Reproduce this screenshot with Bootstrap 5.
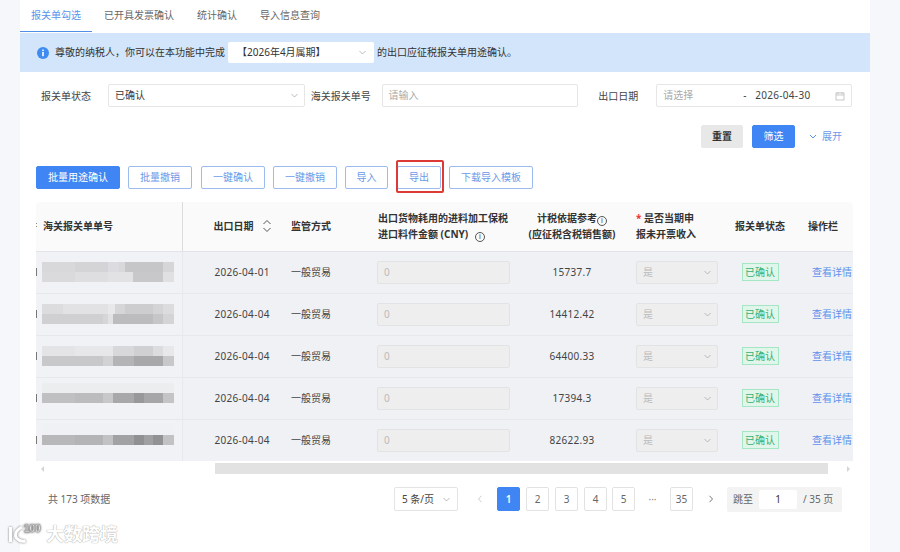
<!DOCTYPE html>
<html lang="zh"><head><meta charset="utf-8"><title>报关单勾选</title>
<link rel="stylesheet" href="https://cdn.jsdelivr.net/npm/bootstrap@5.3.0/dist/css/bootstrap.min.css">
<style>
html,body{height:552px;overflow:hidden}
body{background:#f5f7fa;font-family:"Noto Sans","Noto Sans CJK SC",sans-serif;font-size:10px;color:#3a3a3a}
.shell{width:850px;height:552px;margin-left:20px;background:#fff;position:relative;padding:0}
.tabbar{height:33px;gap:23px;padding-left:11px}
.tabbar a{display:block;line-height:30px;height:32px;color:#666;text-decoration:none;font-size:10px}
.tabbar a.on{color:#5b93ea;border-bottom:1px solid #4f8fe8;margin-left:-11px;padding:0 11px;margin-right:-11px}
.notice{height:39px;background:#d2e5fa;padding-left:17px;color:#333}
.notice svg.info{margin-right:6px}
.period{width:146px;height:21px;background:#fff;border-radius:2px;margin:0 3px 0 3px;padding:0 8px 0 9px;color:#333}
.filter{padding:12px 18px 0 21px;height:52px}
.lab{color:#444;line-height:24px}
.fld{height:23px;border:1px solid #e6e6e6;border-radius:2px;background:#fff;padding:0 6px}
.ph{color:#aaa}
.acts{height:23px;padding-right:28px;margin-top:1px;gap:9px}
.unfold{color:#6c9ae8;width:33px;white-space:nowrap;margin-left:5px}
.unfold svg{margin-right:5px}
.btnx{height:23px;font-size:10px;line-height:21px;padding:0;border-radius:2px;text-align:center;border:1px solid #9bbcec;background:#fff;color:#6c9ae8}
.btnx.solid{background:#3f86f4;border-color:#3f86f4;color:#fff}
.btnx.mute{background:#e8e8e8;border-color:#e8e8e8;color:#333;font-weight:600}
.tools{padding:18px 0 0 16px;height:54px}
.redbox{position:absolute;left:376px;top:160px;width:48px;height:33px;border:2px solid #dc3a35;border-radius:2px}
.gridwrap{margin-left:16px;width:817px;height:259px;overflow:hidden;position:relative;border-radius:4px 4px 0 0}
.datagrid{table-layout:fixed;width:817px;border-collapse:collapse;margin:0;font-size:10px}
.datagrid th{height:49px;background:#fafafa;font-weight:700;color:#333;border:0;border-bottom:1px solid #e2e4e8;padding:0;line-height:16px;vertical-align:middle}
.datagrid td{height:42px;background:#eff1f4;border:0;border-bottom:1px solid #e6e8eb;padding:0;vertical-align:middle;color:#444}
.datagrid .stick{background:#f1f2f5;border-right:1px solid #e8e9ec;position:relative}
.datagrid th.stick{background:#fafafa;border-right:1px solid #dcdcdc;padding-left:7px}
.tick{position:absolute;left:0;top:50%;width:1px;height:8px;margin-top:-4px;background:#777}
.dots{position:absolute;left:0;top:50%;width:1px;height:6px;margin-top:-3px;background:repeating-linear-gradient(180deg,#888 0 1px,transparent 1px 3px)}
.num{letter-spacing:.3px}
.mosaic{display:block;margin-left:6px;width:132px;height:20px;filter:blur(.6px);background-repeat:no-repeat;background-size:100% 50%;background-position:top,bottom}
.m1{background-image:linear-gradient(90deg,#d8d8da 0 25%,#d4d4d6 25% 50%,#dcdce0 50% 58%,#d8d8da 58% 63%,#c6c6c8 63% 92%,#d6d6d8 92%),linear-gradient(90deg,#dadadc 0 25%,#dedee0 25% 50%,#e2e2e4 50% 69%,#c8c8ca 69% 92%,#e0e0e2 92%)}
.m2{background-image:linear-gradient(90deg,#dcdcde 0 16%,#e2e2e4 16% 50%,#e8e8ea 50% 55%,#d6d6d8 55% 63%,#cdcdd0 63% 84%,#d4d4d6 84% 92%,#dcdcde 92%),linear-gradient(90deg,#d0d0d2 0 46%,#d6d6d8 46% 50%,#e2e2e4 50% 54%,#bcbcbf 54% 84%,#c6c6c9 84% 92%,#d4d4d6 92%)}
.m3{background-image:linear-gradient(90deg,#e4e4e6 0 25%,#e7e7e9 25% 54%,#d8d8da 54% 70%,#d0d0d2 70% 84%,#dcdcde 84% 92%,#e8e8ea 92%),linear-gradient(90deg,#c8c8ca 0 46%,#d2d2d4 46% 54%,#b4b4b7 54% 70%,#a8a8ab 70% 92%,#c8c8ca 92%)}
.m4{transform:translateY(-5px);background-image:linear-gradient(90deg,#ecedef 0 100%),linear-gradient(90deg,#c0c0c2 0 25%,#bcbcbe 25% 46%,#c8c8ca 46% 54%,#a8a8ab 54% 70%,#98989b 70% 77%,#a6a6a9 77% 92%,#c4c4c6 92%)}
.m5{transform:translateY(-5px);background-image:linear-gradient(90deg,#eff1f4 0 100%),linear-gradient(90deg,#b8b8ba 0 25%,#b4b4b6 25% 46%,#c2c2c4 46% 54%,#a2a2a5 54% 70%,#909093 70% 77%,#a0a0a3 77% 84%,#929295 84% 92%,#c2c2c4 92%)}
.dis{height:23px;background:#eeeeee;border:1px solid #e2e3e5;border-radius:2px;color:#bbb;padding:0 6px;margin-right:9px}
.confirm{display:inline-block;width:37px;height:18px;line-height:16px;text-align:center;background:#e1f6ea;border:1px solid #a5e6c4;color:#35b074}
.seeit{color:#5d92ec;white-space:nowrap;padding-left:19px}
.hint{display:inline-block;width:10px;height:10px;border:1px solid #555;border-radius:50%;font-size:7px;line-height:8px;text-align:center;font-weight:400;vertical-align:-1px}
.scroller{height:17px;margin-left:16px;width:817px;position:relative}
.scroller i{display:block;position:absolute;left:179px;top:2px;width:613px;height:11px;background:#e2e2e2}
.arr{position:absolute;top:5px}
.pager{padding:9px 0 0 28px;height:40px;color:#666}
.size{width:64px;height:24px;border:1px solid #e4e4e4;border-radius:2px;padding:0 7px;color:#444}
.pgnrow{margin-left:10px;gap:6px}
.pgn{width:23px;height:24px;border:1px solid #e2e2e2;border-radius:2px;line-height:22px;color:#666;background:#fff;display:flex;align-items:center;justify-content:center}
.pgn.cur{background:#3f86f4;border-color:#3f86f4;color:#fff;font-weight:600}
.pgn.bare{border:0;color:#888}
.pgn.tight{margin-left:-1px}
.jump{height:25px;background:#f3f3f3;border-radius:2px;padding:0 6px;gap:6px;margin-left:-1px;width:115px}
.jump b{display:block;width:38px;height:19px;background:#fff;border-radius:2px;text-align:center;line-height:19px;font-weight:400;color:#333;font-size:10px}
.brand{position:absolute;left:-12px;top:524px;display:flex;align-items:center;gap:5px;color:#fff;font-size:18px;font-weight:700;line-height:20px;text-shadow:0 0 1px #aaa,0 0 1px #aaa}
.brand svg{filter:drop-shadow(0 0 1px #777)}
</style></head><body>
<div class="shell">
 <div class="d-flex tabbar align-items-start"><a class="on" href="#">报关单勾选</a><a href="#">已开具发票确认</a><a href="#">统计确认</a><a href="#">导入信息查询</a></div>
 <div class="notice d-flex align-items-center">
  <svg class="info" width="12" height="12" viewBox="0 0 12 12"><circle cx="6" cy="6" r="6" fill="#3f8cf0"/><rect x="5.2" y="5" width="1.6" height="4.2" fill="#fff"/><rect x="5.2" y="2.6" width="1.6" height="1.5" fill="#fff"/></svg>
  <span>尊敬的纳税人，你可以在本功能中完成</span>
  <div class="period d-flex align-items-center justify-content-between"><span>【2026年4月属期】</span><svg width="7" height="5" viewBox="0 0 7 5"><path d="M.5 1l3 3 3-3" fill="none" stroke="#aaa" stroke-width=".8"/></svg></div>
  <span>的出口应征税报关单用途确认。</span>
 </div>
 <div class="filter d-flex align-items-start">
  <span class="lab" style="width:67px">报关单状态</span>
  <div class="fld d-flex align-items-center justify-content-between" style="width:197px"><span>已确认</span><svg width="7" height="5" viewBox="0 0 7 5"><path d="M.5 1l3 3 3-3" fill="none" stroke="#aaa" stroke-width=".8"/></svg></div>
  <span class="lab" style="width:77px;padding-left:6px">海关报关单号</span>
  <div class="fld d-flex align-items-center ph" style="width:197px">请输入</div>
  <span class="lab" style="width:78px;padding-left:20px">出口日期</span>
  <div class="fld d-flex align-items-center" style="width:196px"><span class="ph" style="width:80px">请选择</span><span style="width:12px">-</span><span class="num" style="color:#444">2026-04-30</span><svg class="ms-auto" width="10" height="10" viewBox="0 0 10 10"><rect x="1" y="2" width="8" height="7" fill="none" stroke="#bbb" stroke-width=".8"/><path d="M1 4h8M3 1v2M7 1v2" stroke="#bbb" stroke-width=".8"/></svg></div>
 </div>
 <div class="acts d-flex justify-content-end align-items-center">
  <button class="btnx mute" style="width:42px">重置</button><button class="btnx solid" style="width:43px">筛选</button>
  <span class="unfold"><svg width="8" height="6" viewBox="0 0 8 6"><path d="M1 1l3 3 3-3" fill="none" stroke="#5d92ec" stroke-width="1"/></svg>展开</span>
 </div>
 <div class="tools d-flex align-items-start">
  <button class="btnx solid me-2" style="width:84px">批量用途确认</button><button class="btnx" style="width:64px;margin-right:9px">批量撤销</button><button class="btnx me-2" style="width:64px">一键确认</button><button class="btnx me-2" style="width:64px">一键撤销</button><button class="btnx" style="width:43px;margin-right:9px">导入</button><button class="btnx me-2" style="width:44px">导出</button><button class="btnx" style="width:84px">下载导入模板</button>
 </div>
 <div class="redbox"></div>
 <div class="gridwrap">
  <table class="table datagrid">
   <colgroup><col style="width:146px"><col style="width:99px"><col style="width:86px"><col style="width:152px"><col style="width:106px"><col style="width:102px"><col style="width:66px"><col style="width:60px"></colgroup>
   <thead><tr><th class="stick"><i class="dots"></i>海关报关单单号</th><th style="padding-left:31px"><span class="d-inline-flex align-items-center gap-2">出口日期<svg width="10" height="14" viewBox="0 0 10 14"><path d="M1.500 5l3.500-3.500L8.500 5M1.500 9l3.500 3.500L8.500 9" fill="none" stroke="#555" stroke-width="1"/></svg></span></th><th style="padding-left:10px">监管方式</th><th style="padding-left:11px">出口货物耗用的进料加工保税<br>进口料件金额 (CNY) <span class="hint ms-1">i</span></th><th class="text-center">计税依据参考<span class="hint">i</span><br>(应征税含税销售额)</th><th style="padding-left:11px"><span style="color:#e33">*</span> 是否当期申<br>报未开票收入</th><th class="text-center">报关单状态</th><th class="text-center">操作栏</th></tr></thead>
   <tbody>
    <tr><td class="stick"><i class="tick"></i><span class="mosaic m1"></span></td><td class="num" style="padding-left:32px">2026-04-01</td><td style="padding-left:10px">一般贸易</td><td style="padding-left:10px"><div class="dis d-flex align-items-center">0</div></td><td class="text-center num">15737.7</td><td style="padding-left:11px"><div class="dis d-flex align-items-center justify-content-between"><span>是</span><svg width="7" height="5" viewBox="0 0 7 5"><path d="M.5 1l3 3 3-3" fill="none" stroke="#aaa" stroke-width=".8"/></svg></div></td><td class="text-center"><span class="confirm">已确认</span></td><td><span class="seeit">查看详情</span></td></tr>
    <tr><td class="stick"><i class="tick"></i><span class="mosaic m2"></span></td><td class="num" style="padding-left:32px">2026-04-04</td><td style="padding-left:10px">一般贸易</td><td style="padding-left:10px"><div class="dis d-flex align-items-center">0</div></td><td class="text-center num">14412.42</td><td style="padding-left:11px"><div class="dis d-flex align-items-center justify-content-between"><span>是</span><svg width="7" height="5" viewBox="0 0 7 5"><path d="M.5 1l3 3 3-3" fill="none" stroke="#aaa" stroke-width=".8"/></svg></div></td><td class="text-center"><span class="confirm">已确认</span></td><td><span class="seeit">查看详情</span></td></tr>
    <tr><td class="stick"><i class="tick"></i><span class="mosaic m3"></span></td><td class="num" style="padding-left:32px">2026-04-04</td><td style="padding-left:10px">一般贸易</td><td style="padding-left:10px"><div class="dis d-flex align-items-center">0</div></td><td class="text-center num">64400.33</td><td style="padding-left:11px"><div class="dis d-flex align-items-center justify-content-between"><span>是</span><svg width="7" height="5" viewBox="0 0 7 5"><path d="M.5 1l3 3 3-3" fill="none" stroke="#aaa" stroke-width=".8"/></svg></div></td><td class="text-center"><span class="confirm">已确认</span></td><td><span class="seeit">查看详情</span></td></tr>
    <tr><td class="stick"><i class="tick"></i><span class="mosaic m4"></span></td><td class="num" style="padding-left:32px">2026-04-04</td><td style="padding-left:10px">一般贸易</td><td style="padding-left:10px"><div class="dis d-flex align-items-center">0</div></td><td class="text-center num">17394.3</td><td style="padding-left:11px"><div class="dis d-flex align-items-center justify-content-between"><span>是</span><svg width="7" height="5" viewBox="0 0 7 5"><path d="M.5 1l3 3 3-3" fill="none" stroke="#aaa" stroke-width=".8"/></svg></div></td><td class="text-center"><span class="confirm">已确认</span></td><td><span class="seeit">查看详情</span></td></tr>
    <tr><td class="stick"><i class="tick"></i><span class="mosaic m5"></span></td><td class="num" style="padding-left:32px">2026-04-04</td><td style="padding-left:10px">一般贸易</td><td style="padding-left:10px"><div class="dis d-flex align-items-center">0</div></td><td class="text-center num">82622.93</td><td style="padding-left:11px"><div class="dis d-flex align-items-center justify-content-between"><span>是</span><svg width="7" height="5" viewBox="0 0 7 5"><path d="M.5 1l3 3 3-3" fill="none" stroke="#aaa" stroke-width=".8"/></svg></div></td><td class="text-center"><span class="confirm">已确认</span></td><td><span class="seeit">查看详情</span></td></tr>
   </tbody>
  </table>
 </div>
 <div class="scroller"><svg class="arr" style="left:5px" width="4" height="6" viewBox="0 0 4 6"><path d="M3 0v6L0 3z" fill="#d5d5d5"/></svg><i></i><svg class="arr" style="left:810px" width="4" height="6" viewBox="0 0 4 6"><path d="M1 0v6l3-3z" fill="#d5d5d5"/></svg></div>
 <div class="pager d-flex align-items-start">
  <span style="width:346px;line-height:24px">共 173 项数据</span>
  <div class="size d-flex align-items-center justify-content-between"><span>5 条/页</span><svg width="7" height="5" viewBox="0 0 7 5"><path d="M.5 1l3 3 3-3" fill="none" stroke="#aaa" stroke-width=".8"/></svg></div>
  <div class="d-flex pgnrow align-items-start">
   <span class="pgn bare"><svg width="6" height="8" viewBox="0 0 6 8"><path d="M4.500.8L1.500 4l3 3.200" fill="none" stroke="#ccc" stroke-width="1"/></svg></span><span class="pgn cur">1</span><span class="pgn">2</span><span class="pgn">3</span><span class="pgn">4</span><span class="pgn tight">5</span><span class="pgn bare">···</span><span class="pgn">35</span><span class="pgn bare"><svg width="6" height="8" viewBox="0 0 6 8"><path d="M1.500.8l3 3.200-3 3.200" fill="none" stroke="#777" stroke-width="1"/></svg></span>
   <div class="jump d-flex align-items-center"><span>跳至</span><b>1</b><span>/ 35 页</span></div>
  </div>
 </div>
 <div class="brand"><svg width="33" height="20" viewBox="0 0 33 20"><g fill="none" stroke="#fff" stroke-width="3"><path d="M2.500 3v15"/><path d="M14 3C8.500 6 7 9 7.500 12c1 3.500 5 6 10 5"/></g><text x="16" y="8" font-size="10" font-family="'Liberation Sans',sans-serif" fill="#fff" stroke="#999" stroke-width=".35">100</text></svg><span>大数跨境</span></div>
</div>
</body></html>
